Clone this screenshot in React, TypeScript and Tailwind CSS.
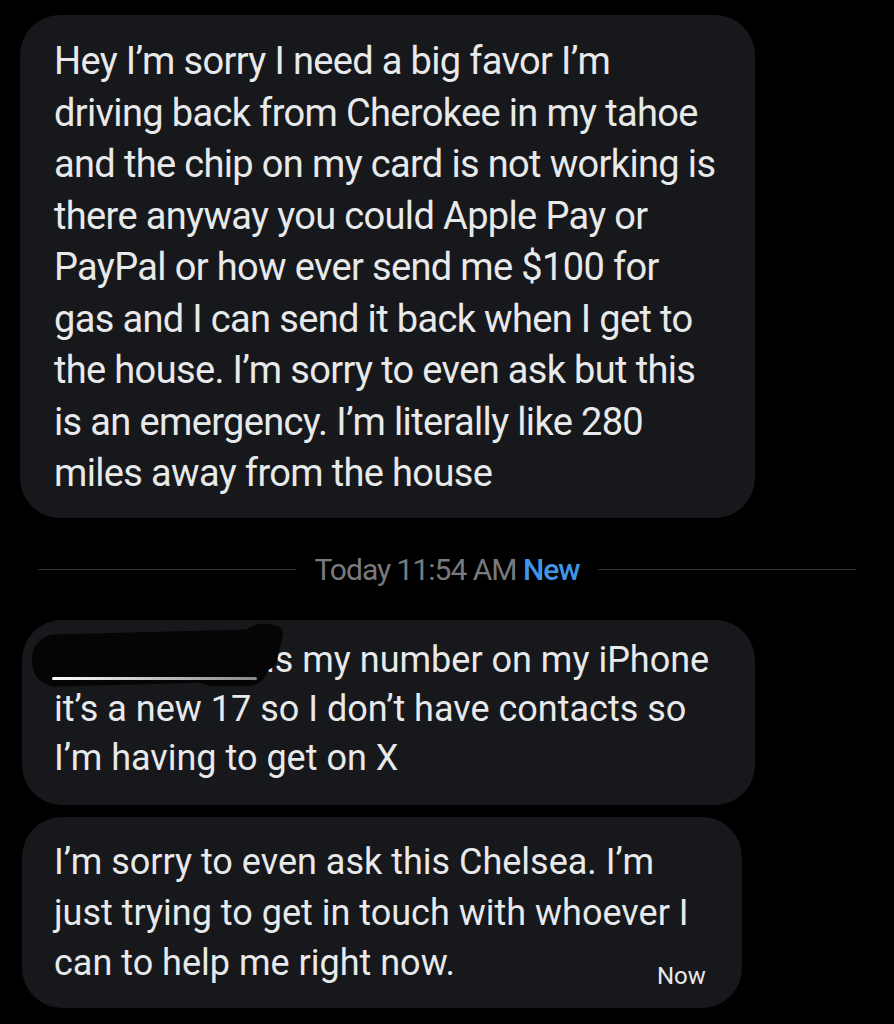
import React from "react";

const font = { fontFamily: "Roboto, 'Noto Sans', sans-serif" };

function Bubble({ children, className = "" }: { children: React.ReactNode; className?: string }) {
  return (
    <div className={`bg-[#17181b] rounded-[40px] text-[#e7e9ea] ${className}`}>{children}</div>
  );
}

export default function App() {
  return (
    <div className="w-[894px] h-[1024px] bg-black overflow-hidden" style={font}>
      <div className="pt-[15px] pl-[20px]">
        <Bubble className="w-[735px] h-[503px] pl-[34px] pt-[21px] text-[38px] leading-[51.5px] tracking-[-0.65px]">
          Hey I’m sorry I need a big favor I’m
          <br />
          driving back from Cherokee in my tahoe
          <br />
          and the chip on my card is not working is
          <br />
          there anyway you could Apple Pay or
          <br />
          PayPal or how ever send me $100 for
          <br />
          gas and I can send it back when I get to
          <br />
          the house. I’m sorry to even ask but this
          <br />
          is an emergency. I’m literally like 280
          <br />
          miles away from the house
        </Bubble>
      </div>

      <div className="flex items-center h-[102px] pl-[38px] pr-[38px]">
        <div className="flex-1 h-px bg-[#2f3336]" />
        <div className="px-[18px] text-[30px] tracking-[-1px]">
          <span className="text-[#777a7e]">Today 11:54 AM</span>{" "}
          <span className="text-[#3f95e6] font-medium">New</span>
        </div>
        <div className="flex-1 h-px bg-[#2f3336]" />
      </div>

      <div className="pl-[22px]">
        <Bubble className="relative w-[733px] h-[185px] pl-[32px] pt-[16px] text-[36px] leading-[49px]">
          <span className="inline-block w-[212px]" />
          is my number on my iPhone
          <br />
          it’s a new 17 so I don’t have contacts so
          <br />
          I’m having to get on X
          <div className="absolute left-[10px] top-[12px] w-[240px] h-[52px] bg-[#050505] rounded-[24px] rotate-[-1.5deg]" />
          <div className="absolute left-[170px] top-[14px] w-[76px] h-[52px] bg-[#050505] rounded-[20px]" />
          <div className="absolute left-[214px] top-[2px] w-[44px] h-[46px] bg-[#050505] rounded-tl-[30px] rounded-tr-[8px] rounded-b-[12px] rotate-[12deg]" />
          <div className="absolute left-[30px] top-[57px] w-[205px] h-[3px] bg-gradient-to-r from-[#ffffff] to-[#888888] rounded-full" />
        </Bubble>
      </div>

      <div className="pl-[22px] pt-[12px]">
        <Bubble className="relative w-[720px] h-[191px] pl-[32px] pt-[20px] text-[36px] leading-[50.5px]">
          I’m sorry to even ask this Chelsea. I’m
          <br />
          just trying to get in touch with whoever I
          <br />
          can to help me right now.
          <span className="absolute left-[635px] top-[145px] text-[24px] leading-[28px] text-[#e7e9ea]">Now</span>
        </Bubble>
      </div>
    </div>
  );
}
